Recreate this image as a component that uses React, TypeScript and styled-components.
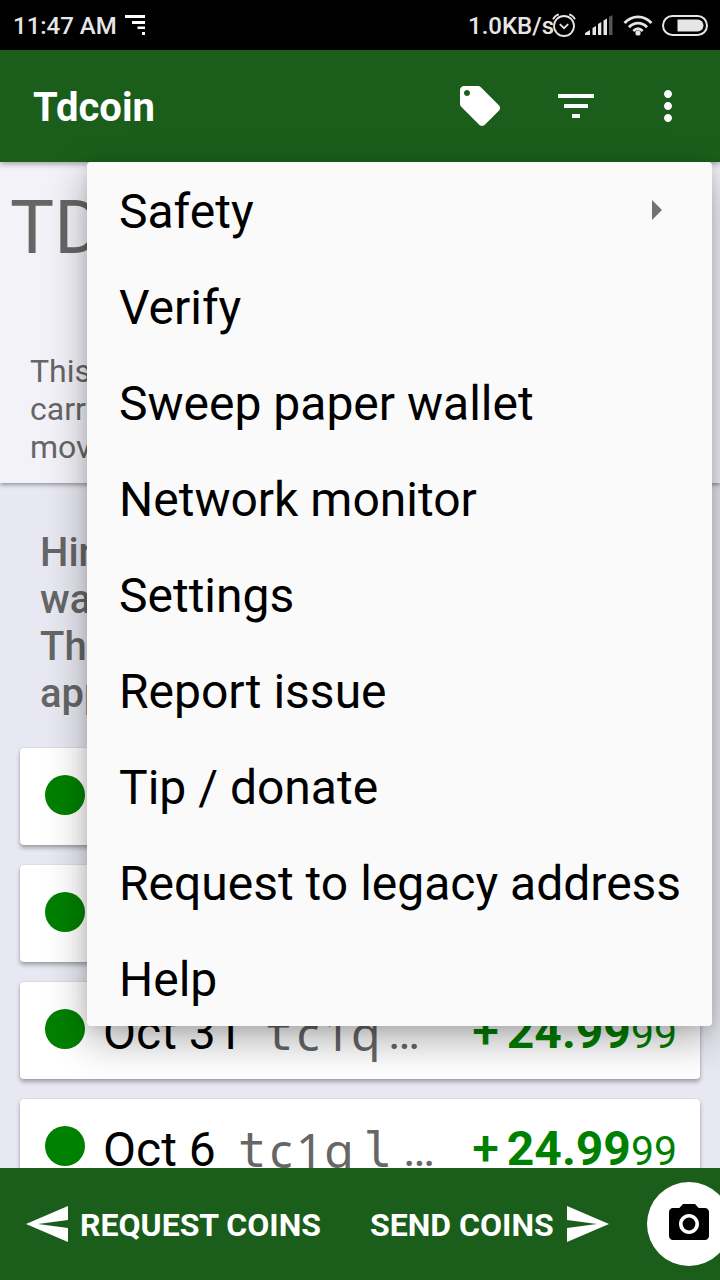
import React from "react";
import styled, { createGlobalStyle } from "styled-components";
import { MdLocalOffer, MdFilterList, MdMoreVert, MdSend, MdCameraAlt } from "react-icons/md";

const GlobalStyle = createGlobalStyle`
  * { box-sizing: border-box; }
  body { margin: 0; font-family: Roboto, "Liberation Sans", sans-serif; }
`;

const Screen = styled.div`
  position: relative;
  width: 720px;
  height: 1280px;
  display: flex;
  flex-direction: column;
  overflow: hidden;
  background: #e8e8f2;
`;

const StatusBar = styled.div`
  flex: none;
  height: 50px;
  display: flex;
  align-items: center;
  padding: 2px 12px 0 13px;
  background: #000;
  color: #e6e6e6;
  font-size: 24px;
  font-weight: 500;
  line-height: 48px;
`;

const StatusText = styled.span<{ $width: number }>`
  width: ${(p) => p.$width}px;
  white-space: nowrap;
`;

const StatusIcon = styled.svg<{ $gap: number }>`
  display: block;
  flex: none;
  margin: -2px 0 0 ${(p) => p.$gap}px;
`;

const Spacer = styled.div`
  flex: 1;
`;

const AppBar = styled.header`
  position: relative;
  z-index: 1;
  flex: none;
  height: 112px;
  display: flex;
  align-items: center;
  padding: 0 28px 0 33px;
  background: #1b5e1b;
  color: #fff;
  box-shadow: 0 2px 6px rgba(0, 0, 0, 0.35);
`;

const Title = styled.h1`
  flex: 1;
  margin: 4px 0 0;
  font-size: 40px;
  font-weight: 700;
  line-height: 48px;
`;

const Actions = styled.div`
  display: flex;
  gap: 48px;
  svg { display: block; }
  svg:last-child { margin-left: -4px; }
`;

const Content = styled.main`
  flex: 1;
  min-height: 0;
  overflow: hidden;
`;

const BalancePanel = styled.section`
  height: 321px;
  padding: 22px 0 0 10px;
  background: #f3f2f8;
  box-shadow: 0 2px 4px rgba(0, 0, 0, 0.35);
  color: #666;
`;

const Currency = styled.div`
  height: 88px;
  font-size: 74px;
  line-height: 88px;
`;

const Warning = styled.p`
  margin: 80px 0 0 20px;
  font-size: 32px;
  line-height: 38px;
`;

const Hint = styled.p`
  margin: 0;
  padding: 46px 40px 31px;
  color: #666;
  font-size: 40px;
  font-weight: 500;
  line-height: 47px;
`;

const List = styled.div`
  display: flex;
  flex-direction: column;
  gap: 20px;
  padding: 0 20px;
`;

const Card = styled.article`
  flex: none;
  height: 97px;
  display: flex;
  align-items: center;
  padding: 4px 23px 0 25px;
  border-radius: 4px;
  background: #fff;
  box-shadow: 0 3px 4px rgba(0, 0, 0, 0.3), 0 0 2px rgba(0, 0, 0, 0.12);
  font-size: 48px;
  line-height: 56px;
  white-space: nowrap;
`;

const Dot = styled.span`
  flex: none;
  width: 40px;
  height: 40px;
  margin: -7px 18px 0 0;
  border-radius: 50%;
  background: #008000;
`;

const DateText = styled.span`
  margin-right: 22px;
`;

const Address = styled.span`
  display: flex;
  color: #666;
`;

const Glyph = styled.span<{ $mono?: boolean; $width?: number }>`
  width: ${(p) => p.$width ?? 28.8}px;
  text-align: center;
  font-family: ${(p) => (p.$mono ? '"DejaVu Sans Mono", monospace' : '"Noto Sans", sans-serif')};
`;

const Ellipsis = styled.span`
  margin-left: 8px;
`;

const Amount = styled.span`
  margin-left: auto;
  color: #008000;
  small { font-size: 41px; }
`;

const Plus = styled.span`
  margin-right: 8px;
  font-weight: 500;
`;

const BottomBar = styled.footer`
  position: relative;
  z-index: 1;
  flex: none;
  height: 112px;
  display: flex;
  align-items: center;
  padding-left: 24px;
  background: #1b5e1b;
  color: #fff;
`;

const BarButton = styled.button<{ $gap: number }>`
  display: flex;
  align-items: center;
  gap: ${(p) => p.$gap}px;
  flex: none;
  padding: 0;
  border: 0;
  background: none;
  color: inherit;
  font: 700 32px/38px Roboto, sans-serif;
  white-space: nowrap;
`;

const BackwardSend = styled(MdSend)`
  transform: scaleX(-1);
`;

const Label = styled.span<{ $width: number }>`
  width: ${(p) => p.$width}px;
  padding-top: 2px;
  text-align: left;
`;

const CameraButton = styled.button`
  flex: none;
  width: 84px;
  height: 84px;
  display: grid;
  place-items: center;
  margin-left: 36px;
  padding: 0;
  border: 0;
  border-radius: 50%;
  background: #fff;
  color: #000;
`;

const Menu = styled.nav`
  position: absolute;
  z-index: 2;
  top: 162px;
  left: 87px;
  width: 625px;
  border-radius: 4px;
  background: #fafafa;
  box-shadow: 0 14px 40px rgba(0, 0, 0, 0.32), 0 2px 12px rgba(0, 0, 0, 0.1);
`;

const MenuItem = styled.div`
  height: 96px;
  display: flex;
  align-items: center;
  justify-content: space-between;
  padding: 3px 0 0 32px;
  color: #000;
  font-size: 48px;
  line-height: 56px;
  white-space: nowrap;
`;

const SubmenuArrow = styled.svg`
  display: block;
  margin: -3px 50px 0 0;
`;

const menuItems = [
  "Safety",
  "Verify",
  "Sweep paper wallet",
  "Network monitor",
  "Settings",
  "Report issue",
  "Tip / donate",
  "Request to legacy address",
  "Help",
];

function Transaction({ date, slab }: { date: string; slab?: boolean }) {
  return (
    <Card>
      <Dot />
      <DateText>{date}</DateText>
      <Address>
        <Glyph $mono>t</Glyph>
        <Glyph>c</Glyph>
        <Glyph>1</Glyph>
        <Glyph>q</Glyph>
        {slab && <Glyph $mono $width={50}>l</Glyph>}
        {slab ? "…" : <Ellipsis>…</Ellipsis>}
      </Address>
      <Amount>
        <Plus>+</Plus>
        <b>24.99</b>
        <small>99</small>
      </Amount>
    </Card>
  );
}

export default function App() {
  return (
    <Screen>
      <GlobalStyle />
      <StatusBar>
        <StatusText $width={98}>11:47 AM</StatusText>
        <StatusIcon $gap={14} width="20" height="20" fill="#fff">
          <path d="M0 0h20v3H0zM7 6h13v3H7zM12.5 11.500h7.500v2.500h-7.500zM17 17h3v3h-3z" />
        </StatusIcon>
        <Spacer />
        <StatusText $width={79}>1.0KB/s</StatusText>
        <StatusIcon $gap={5} width="24" height="24" fill="none" stroke="#e6e6e6" strokeWidth="1.800">
          <circle cx="12" cy="13" r="10" />
          <path d="M7.800 11.200l4.200 4 4.200-4M1 6.200Q3 2.500 6.800 1.400M23 6.200Q21 2.500 17.200 1.400" />
        </StatusIcon>
        <StatusIcon $gap={9} width="28" height="20" fill="#e6e6e6">
          <path d="M0 20v-2l5-3v5zM7.500 20v-7l3.500-2v9zM13 20V9l3.300-2v13zM18.500 20V5.500L22 3.500V20z" />
          <path d="M24 20V2l3.500-2v20z" fill="#555" />
        </StatusIcon>
        <StatusIcon $gap={10} width="30" height="21" fill="none" stroke="#e6e6e6" strokeWidth="2.800">
          <path d="M1.500 8C9 -.3 21 -.3 28.500 8M6 12.300c5-5.500 13-5.500 18 0M10.300 16c3-2.800 6.400-2.800 9.400 0" />
          <circle cx="15" cy="18" r="2.600" fill="#e6e6e6" stroke="none" />
        </StatusIcon>
        <StatusIcon $gap={9} width="46" height="21" fill="none">
          <rect x="1" y="1" width="44" height="19" rx="9.500" stroke="#e6e6e6" strokeWidth="2" />
          <path d="M15.500 4.500h20a6 6 0 0 1 0 12h-20z" fill="#e6e6e6" />
        </StatusIcon>
      </StatusBar>
      <AppBar>
        <Title>Tdcoin</Title>
        <Actions>
          <MdLocalOffer size={48} />
          <MdFilterList size={48} />
          <MdMoreVert size={48} />
        </Actions>
      </AppBar>
      <Content>
        <BalancePanel>
          <Currency>TD</Currency>
          <Warning>
            This
            <br />
            carry
            <br />
            move
          </Warning>
        </BalancePanel>
        <Hint>
          Hint
          <br />
          wall
          <br />
          The
          <br />
          app
        </Hint>
        <List>
          <Card>
            <Dot />
          </Card>
          <Card>
            <Dot />
          </Card>
          <Transaction date="Oct 31" />
          <Transaction date="Oct 6" slab />
        </List>
      </Content>
      <BottomBar>
        <BarButton $gap={8}>
          <BackwardSend size={48} />
          <Label $width={290}>REQUEST COINS</Label>
        </BarButton>
        <BarButton $gap={8}>
          <Label $width={185}>SEND COINS</Label>
          <MdSend size={48} />
        </BarButton>
        <CameraButton aria-label="Scan">
          <MdCameraAlt size={48} />
        </CameraButton>
      </BottomBar>
      <Menu>
        {menuItems.map((item, i) => (
          <MenuItem key={item}>
            {item}
            {i === 0 && (
              <SubmenuArrow width="10" height="20" fill="#737373">
                <path d="M0 0l10 10L0 20z" />
              </SubmenuArrow>
            )}
          </MenuItem>
        ))}
      </Menu>
    </Screen>
  );
}
